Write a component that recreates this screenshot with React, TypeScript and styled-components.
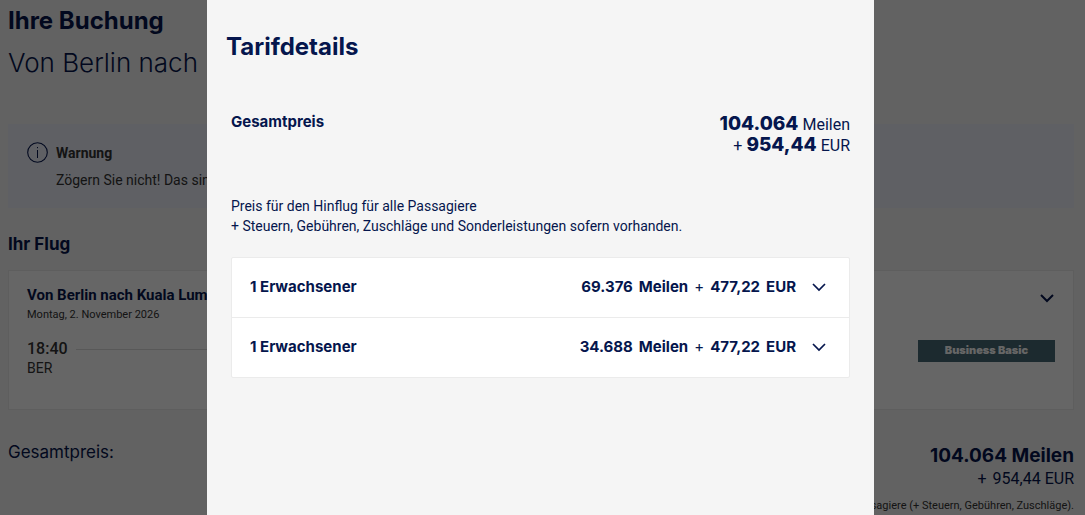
import React, { useState } from "react";
import styled, { createGlobalStyle } from "styled-components";

const navy = "#05164d";
const display = `Inter, "Liberation Sans", sans-serif`;
const text = `Roboto, "Liberation Sans", sans-serif`;

const GlobalStyle = createGlobalStyle`
  *, *::before, *::after { box-sizing: border-box; }
  html, body { margin: 0; overflow: hidden; background: #f5f5f5; }
  body { font-family: ${text}; color: ${navy}; }
  h1, h2, h3, p { margin: 0; }
  button { font: inherit; color: inherit; cursor: pointer; }
`;

const Page = styled.main`
  padding: 5px 11px 0 8px;
`;

const PageTitle = styled.h1`
  font: 700 24px/32px ${display};
`;

const Route = styled.p`
  margin-top: 8px;
  font: 300 26px/36px ${display};
`;

const Alert = styled.section`
  display: flex;
  gap: 8px;
  height: 84px;
  margin-top: 43px;
  padding: 18px 19px;
  background: #edf0fa;
  color: #333;
`;

const AlertTitle = styled.h3`
  font: 700 14px/20px ${text};
  padding-top: 1px;
`;

const AlertText = styled.p`
  margin-top: 7px;
  font: 400 14px/20px ${text};
`;

const SectionTitle = styled.h2`
  margin-top: 24px;
  font: 700 17px/24px ${display};
`;

const FlightCard = styled.section`
  height: 140px;
  margin-top: 14px;
  padding: 14px 18px;
  border: 1px solid #ebebeb;
  background: #fff;
`;

const FlightHead = styled.header`
  display: flex;
  justify-content: space-between;
`;

const FlightTitle = styled.h3`
  font: 700 15px/20px ${text};
`;

const FlightDate = styled.p`
  font: 400 11px/20px ${text};
  color: #333;
`;

const IconButton = styled.button`
  display: flex;
  align-self: flex-start;
  padding: 8px 1px 0;
  border: 0;
  background: none;
`;

const FlightBody = styled.div`
  display: flex;
  justify-content: space-between;
  align-items: flex-start;
  margin-top: 14px;
  color: #333;
`;

const Leg = styled.div`
  display: flex;
  align-items: flex-start;
  gap: 8px;
  width: 70%;
`;

const Departure = styled.div`
  font: 400 14px/18px ${text};
`;

const Time = styled.time`
  display: block;
  font: 500 16px/20px ${text};
`;

const Track = styled.div`
  flex: 1;
  height: 1px;
  margin-top: 10px;
  background: #dcdcdc;
`;

const Fare = styled.div`
  width: 137px;
  height: 22px;
  margin-top: 1px;
  background: #486975;
  color: #fff;
  font: 900 11px/20px ${display};
  text-align: center;
`;

const Total = styled.section`
  display: flex;
  justify-content: space-between;
  margin-top: 30px;
  font: 400 17px/24px ${display};
`;

const TotalPrice = styled.div`
  text-align: right;
`;

const TotalMiles = styled.p`
  padding-top: 4px;
  font: 700 19px/24px ${display};
`;

const TotalCash = styled.p`
  display: flex;
  justify-content: flex-end;
  gap: 6px;
  font: 400 16px/22px ${text};
`;

const TotalNote = styled.p`
  margin-top: 8px;
  color: #333;
  font: 400 11px/16px ${text};
`;

const Overlay = styled.div`
  position: fixed;
  inset: 0;
  display: flex;
  justify-content: center;
  padding-right: 4px;
  background: rgba(0, 0, 0, 0.6);
`;

const Dialog = styled.section`
  width: 100%;
  max-width: 667px;
  padding: 31px 24px 24px;
  background: #f5f5f5;
  overflow: auto;
`;

const DialogTitle = styled.h2`
  margin-left: -5px;
  font: 700 24px/32px ${display};
`;

const Summary = styled.div`
  display: flex;
  justify-content: space-between;
  margin-top: 47px;
`;

const SummaryLabel = styled.h3`
  font: 700 15px/24px ${display};
`;

const SummaryPrice = styled.div`
  padding-top: 4px;
`;

const PriceLine = styled.p`
  display: flex;
  justify-content: flex-end;
  align-items: baseline;
  gap: 4px;
  font: 400 16px/21px ${text};

  strong {
    font: 800 19px/20px ${display};
  }
`;

const Note = styled.p`
  margin-top: 40px;
  font: 400 14px/20px ${text};
`;

const FareList = styled.ul`
  margin: 21px 0 0;
  padding: 0;
  list-style: none;
  border: 1px solid #ebebeb;
  border-radius: 2px;
  background: #fff;

  li + li {
    border-top: 1px solid #ebebeb;
  }
`;

const FareRow = styled.button`
  display: flex;
  align-items: center;
  width: 100%;
  height: 59px;
  padding: 0 23px 2px 18px;
  border: 0;
  background: none;
  text-align: left;

  && {
    font: 700 15px/20px ${display};
  }
`;

const FarePrice = styled.span`
  display: flex;
  gap: 6px;
  margin: 0 16px 0 auto;
`;

const Plus = styled.span`
  font-weight: 400;
`;

function Chevron({ weight = 2 }: { weight?: number }) {
  return (
    <svg width="14" height="10" viewBox="0 0 14 10" fill="none" aria-hidden="true">
      <path d="M1 2 L7 8 L13 2" stroke={navy} strokeWidth={weight} />
    </svg>
  );
}

function InfoIcon() {
  return (
    <svg width="21" height="21" viewBox="0 0 21 21" fill="none" aria-hidden="true">
      <circle cx="10.5" cy="10.5" r="9.8" stroke={navy} strokeWidth="1.1" />
      <path d="M10.5 8V16M10.5 5V6.2" stroke={navy} strokeWidth="1" />
    </svg>
  );
}

const fares = [
  { id: "out", passengers: "1 Erwachsener", miles: "69.376", cash: "477,22" },
  { id: "back", passengers: "1 Erwachsener", miles: "34.688", cash: "477,22" },
];

export default function App() {
  const [selected, setSelected] = useState<string | null>(null);

  return (
    <>
      <GlobalStyle />
      <Page>
        <PageTitle>Ihre Buchung</PageTitle>
        <Route>Von Berlin nach Kuala Lumpur</Route>
        <Alert>
          <InfoIcon />
          <div>
            <AlertTitle>Warnung</AlertTitle>
            <AlertText>Zögern Sie nicht! Das sind</AlertText>
          </div>
        </Alert>
        <SectionTitle>Ihr Flug</SectionTitle>
        <FlightCard>
          <FlightHead>
            <div>
              <FlightTitle>Von Berlin nach Kuala Lumpur</FlightTitle>
              <FlightDate>Montag, 2. November 2026</FlightDate>
            </div>
            <IconButton type="button" aria-label="Flugdetails anzeigen">
              <Chevron weight={2} />
            </IconButton>
          </FlightHead>
          <FlightBody>
            <Leg>
              <Departure>
                <Time>18:40</Time>
                BER
              </Departure>
              <Track />
            </Leg>
            <Fare>Business Basic</Fare>
          </FlightBody>
        </FlightCard>
        <Total>
          <p>Gesamtpreis:</p>
          <TotalPrice>
            <TotalMiles>104.064 Meilen</TotalMiles>
            <TotalCash>
              <span>+</span>
              <span>954,44 EUR</span>
            </TotalCash>
            <TotalNote>Passagiere (+ Steuern, Gebühren, Zuschläge).</TotalNote>
          </TotalPrice>
        </Total>
      </Page>
      <Overlay>
        <Dialog role="dialog" aria-modal="true" aria-labelledby="fare-title">
          <DialogTitle id="fare-title">Tarifdetails</DialogTitle>
          <Summary>
            <SummaryLabel>Gesamtpreis</SummaryLabel>
            <SummaryPrice>
              <PriceLine>
                <strong>104.064</strong> Meilen
              </PriceLine>
              <PriceLine>
                + <strong>954,44</strong> EUR
              </PriceLine>
            </SummaryPrice>
          </Summary>
          <Note>
            Preis für den Hinflug für alle Passagiere
            <br />+ Steuern, Gebühren, Zuschläge und Sonderleistungen sofern vorhanden.
          </Note>
          <FareList>
            {fares.map((fare) => (
              <li key={fare.id}>
                <FareRow
                  type="button"
                  aria-expanded={selected === fare.id}
                  onClick={() => setSelected(selected === fare.id ? null : fare.id)}
                >
                  <span>{fare.passengers}</span>
                  <FarePrice>
                    <span>{fare.miles}</span>
                    <span>Meilen</span>
                    <Plus>+</Plus>
                    <span>{fare.cash}</span>
                    <span>EUR</span>
                  </FarePrice>
                  <Chevron weight={1.7} />
                </FareRow>
              </li>
            ))}
          </FareList>
        </Dialog>
      </Overlay>
    </>
  );
}
